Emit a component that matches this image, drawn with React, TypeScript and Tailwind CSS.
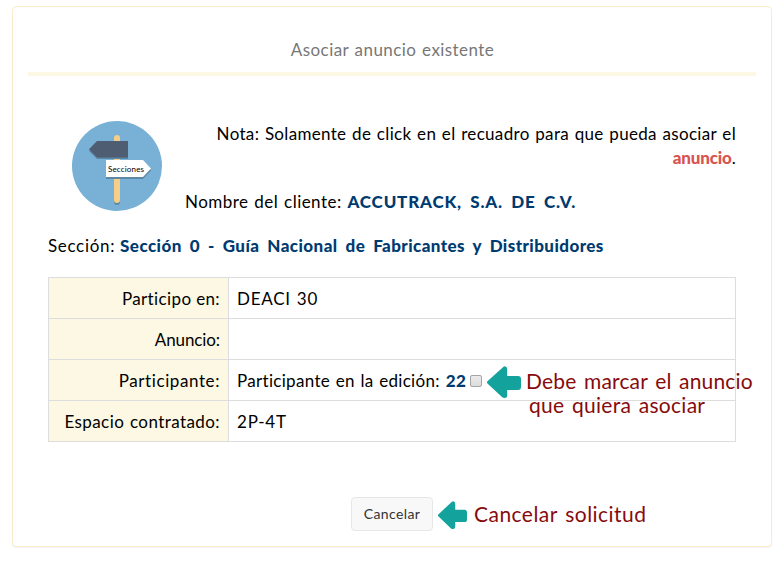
import type { ReactNode } from "react";

function Strong({ children, className = "" }: { children: ReactNode; className?: string }) {
  return <strong className={`font-black text-[#003b70] ${className}`}>{children}</strong>;
}

function SignpostIcon() {
  return (
    <svg viewBox="0 0 90 90" className="-mt-px h-[90px] w-[90px] shrink-0">
      <circle cx="45" cy="45" r="45" fill="#78b1d5" />
      <rect x="42" y="16" width="6" height="68" rx="3" fill="#5b8ba9" />
      <rect x="42" y="14" width="6" height="68" rx="3" fill="#f5cf87" />
      <path d="M25 22H56V38H25L17 30Z" fill="#5c88a5" />
      <path d="M25 20H56V36.5H25L17 28.2Z" fill="#4f5d73" />
      <path d="M34 41H71L79 49.5L71 58H34Z" fill="#5c88a5" />
      <path d="M34 39H71L79 47.5L71 56H34Z" fill="#fff" />
      <text x="36" y="51" fontSize="8" fontWeight="400" textLength="36" fill="#000">
        Secciones
      </text>
    </svg>
  );
}

function Arrow({ className }: { className: string }) {
  return (
    <svg viewBox="0 0 34 32" preserveAspectRatio="none" className={className}>
      <path
        d="M0.7 15L16 1.2Q17.5-.4 19 .8Q20.2 1.5 20.2 3V10H31Q34 10 34 13V21Q34 24 31 24H20.2V29.5Q20.2 32 17.5 32Q16 32 15 31L0.7 17.8Q-.8 16.4 .7 15Z"
        fill="#13a29c"
      />
    </svg>
  );
}

function Row({ label, labelClass, children }: { label: string; labelClass: string; children?: ReactNode }) {
  return (
    <tr className="h-[41px]">
      <th className="w-[180px] border border-[#ddd] bg-[#fcf8e3] p-0 pr-2 pt-[2px] text-right font-normal">
        <span className={labelClass}>{label}</span>
      </th>
      <td className="border border-[#ddd] p-0 pl-2 pt-[2px]">{children}</td>
    </tr>
  );
}

export default function App() {
  return (
    <div className="h-[567px] w-[784px] overflow-hidden bg-white pl-3 pt-[6px] font-['Comic_Sans_MS',Lato,sans-serif] text-[17px] leading-6 text-black">
      <main className="relative h-[541px] w-[760px] rounded-[4px] border border-[#faebcc] px-[15px] shadow-[0_1px_1px_rgba(0,0,0,0.05)]">
        <h1 className="h-[69px] border-b-4 border-[#fcf8e3] pl-px pt-[31px] text-center tracking-[0.43px] text-[#777] [word-spacing:1px]">
          Asociar anuncio existente
        </h1>
        <div className="px-5">
          <div className="flex h-[157px] items-start pl-6 pt-[46px]">
            <SignpostIcon />
            <div className="flex-1 whitespace-nowrap">
              <p className="text-right tracking-[0.32px] [word-spacing:1px]">
                Nota: Solamente de click en el recuadro para que pueda asociar el
                <br />
                <strong className="font-black tracking-[-0.18px] text-[#d9534f]">anuncio</strong>.
              </p>
              <p className="mt-5 pl-[23px] tracking-[0.47px] [word-spacing:1px]">
                Nombre del cliente: <Strong className="tracking-[0.82px] [word-spacing:3.5px]">ACCUTRACK, S.A. DE C.V.</Strong>
              </p>
            </div>
          </div>
          <p className="pt-[1px] tracking-[0.67px]">
            Sección: <Strong className="tracking-[0.43px] [word-spacing:3.5px]">Sección 0 - Guía Nacional de Fabricantes y Distribuidores</Strong>
          </p>
          <table className="mt-[19px] w-[688px] border-collapse">
            <tbody>
              <Row label="Participo en:" labelClass="tracking-[0.38px]">
                <span className="tracking-[0.74px] [word-spacing:1px]">DEACI 30</span>
              </Row>
              <Row label="Anuncio:" labelClass="tracking-[-0.1px]" />
              <Row label="Participante:" labelClass="tracking-[0.59px]">
                <div className="flex items-center">
                  <span className="tracking-[0.31px] [word-spacing:1px]">Participante en la edición:</span>
                  <Strong className="ml-[6px] tracking-[0.4px]">22</Strong>
                  <input
                    type="checkbox"
                    aria-label="22"
                    className="-mt-px ml-1 h-3 w-3 appearance-none rounded-[2px] border border-[#a5a5a5] bg-linear-to-b from-[#ececec] to-[#dcdcdc]"
                  />
                </div>
              </Row>
              <Row label="Espacio contratado:" labelClass="tracking-[0.42px] [word-spacing:1px]">
                <span className="tracking-[0.77px]">2P-4T</span>
              </Row>
            </tbody>
          </table>
        </div>
        <div className="mt-[55px] flex items-center pl-[323px]">
          <button className="h-[34px] w-[82px] rounded-[4px] border border-[#e7e7e7] bg-[#f8f8f8] text-sm tracking-[0.37px] text-[#333]">
            Cancelar
          </button>
          <Arrow className="ml-[5px] mt-[2px] h-[28px] w-[29px]" />
          <span className="ml-[7px] text-[21px] tracking-[0.46px] text-[#870b0d] [word-spacing:2px]">Cancelar solicitud</span>
        </div>
        <div className="absolute left-[474px] top-[359px] flex items-start whitespace-nowrap text-[21px] text-[#870b0d]">
          <Arrow className="h-[32px] w-[34px]" />
          <p className="ml-[5px] mt-[3px]">
            <span className="block tracking-[0.17px] [word-spacing:2px]">Debe marcar el anuncio</span>
            <span className="block pl-[3px] tracking-[0.27px] [word-spacing:2px]">que quiera asociar</span>
          </p>
        </div>
      </main>
    </div>
  );
}
